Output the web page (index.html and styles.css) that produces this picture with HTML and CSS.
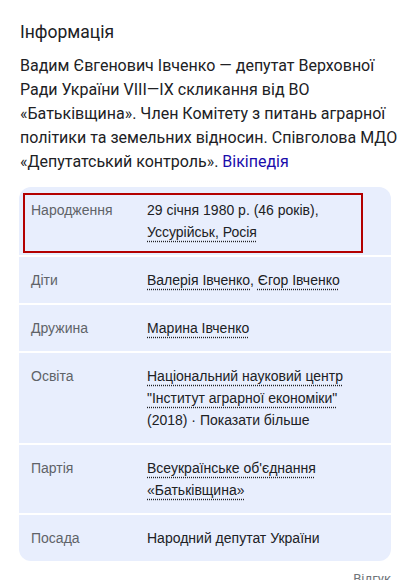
FILE: index.html
```html
<!DOCTYPE html>
<html lang="uk">
<head>
    <meta charset="UTF-8">
    <meta name="viewport" content="width=device-width, initial-scale=1.0">
    <title>Інформація</title>
    <link rel="stylesheet" href="styles.css">
</head>
<body>
    <div class="panel">
        <h2 class="title">Інформація</h2>
        <p class="about">
            Вадим Євгенович Івченко — депутат Верховної Ради України VIII—IX скликання від ВО «Батьківщина». Член Комітету з питань аграрної політики та земельних відносин. Співголова МДО «Депутатський контроль». <a href="#" class="wiki">Вікіпедія</a>
        </p>

        <!-- Facts table -->
        <div class="facts">
            <div class="fact-row highlighted">
                <div class="fact-label">Народження</div>
                <div class="fact-value">29 січня 1980 р. (46 років), <a href="#" class="dotted">Уссурійськ, Росія</a></div>
            </div>
            <div class="fact-row">
                <div class="fact-label">Діти</div>
                <div class="fact-value"><a href="#" class="dotted">Валерія Івченко</a>, <a href="#" class="dotted">Єгор Івченко</a></div>
            </div>
            <div class="fact-row">
                <div class="fact-label">Дружина</div>
                <div class="fact-value"><a href="#" class="dotted">Марина Івченко</a></div>
            </div>
            <div class="fact-row">
                <div class="fact-label">Освіта</div>
                <div class="fact-value"><a href="#" class="dotted">Національний науковий центр "Інститут аграрної економіки"</a> (2018) · Показати більше</div>
            </div>
            <div class="fact-row">
                <div class="fact-label">Партія</div>
                <div class="fact-value"><a href="#" class="dotted">Всеукраїнське об'єднання «Батьківщина»</a></div>
            </div>
            <div class="fact-row">
                <div class="fact-label">Посада</div>
                <div class="fact-value">Народний депутат України</div>
            </div>
        </div>

        <div class="feedback">Відгук</div>
    </div>
</body>
</html>
```

FILE: styles.css
```css
body {
    margin: 0;
    padding: 0;
    font-family: Roboto, "Liberation Sans", Arial, sans-serif;
    background-color: #ffffff;
    color: #202124;
}

.panel {
    width: 372px;
    padding: 20px 0 0 19px;
}

.title {
    font-size: 17.5px;
    font-weight: normal;
    line-height: 24px;
    margin: 0 0 10px 1px;
    color: #202124;
}

.about {
    font-size: 16px;
    line-height: 24px;
    margin: 0 -20px 13px 1px;
}

.wiki {
    color: #1a0dab;
    text-decoration: none;
}

.facts {
    display: flex;
    flex-direction: column;
    gap: 2px;
    border-radius: 12px;
    overflow: hidden;
}

.fact-row {
    display: flex;
    padding: 12px 12px;
    background-color: #e8eefd;
    font-family: "Liberation Sans", Arial, sans-serif;
    font-size: 14px;
    line-height: 22px;
}

.fact-row.highlighted {
    position: relative;
}

.fact-row.highlighted::after {
    content: "";
    position: absolute;
    left: 4px;
    top: 6px;
    width: 336px;
    height: 56px;
    border: 2px solid #b30000;
}

.fact-label {
    flex: 0 0 116px;
    color: #5f6368;
}

.fact-value {
    flex: 1;
    color: #202124;
    padding-right: 30px;
}

.dotted {
    color: #202124;
    text-decoration: underline dotted;
    text-underline-offset: 4px;
}

.feedback {
    text-align: right;
    font-size: 13px;
    color: #70757a;
    margin-top: 10px;
}
```
